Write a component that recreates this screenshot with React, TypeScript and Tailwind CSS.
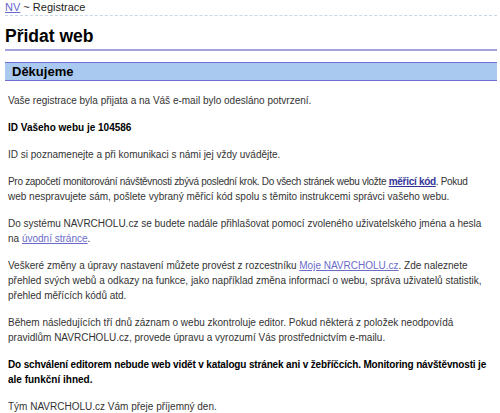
import React from 'react';

export default function App() {
  return (
    <div className="w-[500px] h-[413px] overflow-hidden bg-white text-[#333] font-['Liberation_Sans',Arial,sans-serif]">
      <div className="pl-[5px] pr-[3px]">
        <div className="pt-[1px] h-[16px] text-[11px] leading-[13px] border-b border-dashed border-[#c8d8e8]">
          <a href="#" className="text-[#6666cc] underline">NV</a>
          <span className="text-[#222]"> ~ Registrace</span>
        </div>

        <h1 className="mt-[10px] pb-[3px] text-[17.5px] leading-[20px] font-bold text-black border-b-2 border-[#a4a4dc]">
          Přidat web
        </h1>

        <div className="mt-[11px] h-[19px] pl-[7px] text-[13px] leading-[17px] font-bold text-black bg-[#a9c9f1] border-y border-[#6f6fd6]">
          Děkujeme
        </div>

        <div className="pl-[3px] pt-[12px] text-[10px] leading-[15px] whitespace-nowrap">
          <p className="mb-3">Vaše registrace byla přijata a na Váš e-mail bylo odesláno potvrzení.</p>
          <p className="mb-3 font-bold text-black">ID Vašeho webu je 104586</p>
          <p className="mb-3">ID si poznamenejte a při komunikaci s námi jej vždy uvádějte.</p>
          <p className="mb-3">
            <span className="tracking-[-0.3px]">
              Pro započetí monitorování návštěvnosti zbývá poslední krok. Do všech stránek webu vložte{' '}
              <a href="#" className="font-bold text-[#333399] underline">měřicí kód</a>. Pokud
            </span>
            <br />
            web nespravujete sám, pošlete vybraný měřicí kód spolu s těmito instrukcemi správci vašeho webu.
          </p>
          <p className="mb-3">
            Do systému NAVRCHOLU.cz se budete nadále přihlašovat pomocí zvoleného uživatelského jména a hesla
            <br />
            na <a href="#" className="text-[#6b6bc8] underline">úvodní stránce</a>.
          </p>
          <p className="mb-3">
            Veškeré změny a úpravy nastavení můžete provést z rozcestníku{' '}
            <a href="#" className="text-[#6b6bc8] underline">Moje NAVRCHOLU.cz</a>. Zde naleznete
            <br />
            přehled svých webů a odkazy na funkce, jako například změna informací o webu, správa uživatelů statistik,
            <br />
            přehled měřících kódů atd.
          </p>
          <p className="mb-3">
            Během následujících tří dnů záznam o webu zkontroluje editor. Pokud některá z položek neodpovídá
            <br />
            pravidlům NAVRCHOLU.cz, provede úpravu a vyrozumí Vás prostřednictvím e-mailu.
          </p>
          <p className="mb-3 font-bold text-black">
            <span className="tracking-[-0.15px]">
              Do schválení editorem nebude web vidět v katalogu stránek ani v žebříčcích. Monitoring návštěvnosti je
            </span>
            <br />
            ale funkční ihned.
          </p>
          <p className="mb-3">Tým NAVRCHOLU.cz Vám přeje příjemný den.</p>
        </div>
      </div>
    </div>
  );
}
